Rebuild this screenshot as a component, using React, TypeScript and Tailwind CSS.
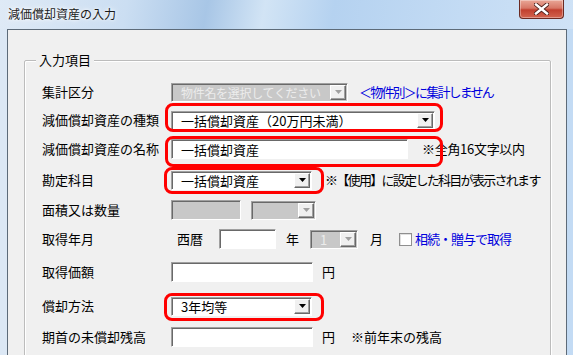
type ComboProps = {
  width: string;
  text?: string;
  disabled?: boolean;
  small?: boolean;
};

function Arrow({ disabled }: { disabled?: boolean }) {
  return (
    <div className="flex h-full w-[16px] shrink-0 items-center justify-center border-t border-l border-t-white border-l-white border-r border-b border-r-[#696969] border-b-[#696969] bg-[#f0f0f0] shadow-[inset_-1px_-1px_0_#a0a0a0]">
      <svg width="7" height="4" viewBox="0 0 7 4">
        <path d="M0 0h7L3.5 4z" fill={disabled ? "#a0a0a0" : "#000"} />
      </svg>
    </div>
  );
}

function Combo({ width, text, disabled, small }: ComboProps) {
  return (
    <div
      className={`flex h-[19px] shrink-0 items-stretch border border-t-[#a0a0a0] border-l-[#a0a0a0] border-b-white border-r-white shadow-[inset_1px_1px_0_#696969] ${width} ${
        disabled ? "bg-[#c8c8c8]" : "bg-white"
      }`}
    >
      <div
        className={`flex flex-1 items-center overflow-hidden whitespace-nowrap pl-[9px] pt-px leading-none ${
          small ? "text-[12px] tracking-[-0.3px]" : "text-[13px]"
        } ${disabled ? "text-[#ececec]" : "text-black"}`}
      >
        {text}
      </div>
      <div className="py-px pr-px">
        <Arrow disabled={disabled} />
      </div>
    </div>
  );
}

function TextBox({ width, disabled }: { width: string; disabled?: boolean }) {
  return (
    <div
      className={`h-[20px] shrink-0 border border-t-[#a0a0a0] border-l-[#a0a0a0] border-b-white border-r-white shadow-[inset_1px_1px_0_#696969] ${width} ${
        disabled ? "bg-[#c8c8c8]" : "bg-white"
      }`}
    />
  );
}

function Row({
  h,
  label,
  children,
}: {
  h: string;
  label: string;
  children?: React.ReactNode;
}) {
  return (
    <div className={`relative flex items-center ${h}`}>
      <div className="w-[129px] shrink-0 whitespace-nowrap">{label}</div>
      {children}
    </div>
  );
}

function CloseButton() {
  return (
    <div className="flex h-[19px] w-[45px] items-center justify-center rounded-b-[4px] border border-t-0 border-[#6b2a22] bg-[linear-gradient(180deg,#e9a797_0%,#d77766_45%,#c1402f_55%,#d2644f_100%)] shadow-[inset_0_0_0_1px_rgba(255,255,255,0.35)]">
      <svg width="15" height="12" viewBox="0 0 15 12">
        <path
          d="M2 1.5l11 9M13 1.5l-11 9"
          stroke="#4a1f1a"
          strokeWidth="4.2"
          strokeLinecap="square"
        />
        <path
          d="M2 1.5l11 9M13 1.5l-11 9"
          stroke="#fff"
          strokeWidth="2.4"
          strokeLinecap="square"
        />
      </svg>
    </div>
  );
}

export default function App() {
  return (
    <div className="flex h-[355px] w-[573px] flex-col overflow-hidden bg-[#c8dcf2] font-['Noto_Sans_CJK_JP',sans-serif] text-[13px] text-black">
      {/* title bar */}
      <div className="flex h-[29px] shrink-0 items-start bg-[linear-gradient(100deg,#dfeaf6_0%,#cbdef2_22%,#a8c6e6_36%,#d2e4f5_46%,#b5d2f0_58%,#c3dbf4_80%,#cfe2f6_100%)]">
        <div className="pl-[8px] pt-[6px] text-[12px] leading-[16px] text-[#1a1a1a] [text-shadow:0_0_6px_#fff,0_0_3px_#fff]">
          減価償却資産の入力
        </div>
        <div className="ml-auto mr-[9px]">
          <CloseButton />
        </div>
      </div>

      {/* client */}
      <div className="flex flex-1">
        <div className="w-[7px] shrink-0 bg-[#dce8f5]" />
        <div className="flex-1 border-t border-l border-r border-[#5d6b79] bg-[#f0f0f0] pl-[16px] pr-[15px] pt-[30px]">
          <div className="relative h-[400px] rounded-[2px] border border-[#bcbcbc] pl-[17px] pt-[17px] shadow-[inset_1px_1px_0_#fff,1px_1px_0_#fff]">
            <span className="absolute -top-[10px] left-[11px] bg-[#f0f0f0] px-[3px] leading-[18px]">
              入力項目
            </span>

            <Row h="h-[28px]" label="集計区分">
              <Combo width="w-[177px]" text="物件名を選択してください" disabled small />
              <span className="ml-[11px] whitespace-nowrap tracking-[-1.8px] text-[#0000dd]">
                ＜物件別＞に集計しません
              </span>
            </Row>

            <Row h="h-[28px]" label="減価償却資産の種類">
              <Combo width="w-[264px]" text="一括償却資産（20万円未満）" />
              <div className="pointer-events-none absolute left-[123px] top-[-3px] h-[29px] w-[278px] rounded-[8px] border-[3px] border-[#f00]" />
            </Row>

            <Row h="h-[30px]" label="減価償却資産の名称">
              <div className="flex h-[20px] w-[237px] shrink-0 items-center border border-t-[#a0a0a0] border-l-[#a0a0a0] border-b-white border-r-white bg-white pl-[9px] pt-px leading-none shadow-[inset_1px_1px_0_#696969]">
                一括償却資産
              </div>
              <span className="ml-[14px] whitespace-nowrap tracking-[-0.3px]">※全角16文字以内</span>
              <div className="pointer-events-none absolute left-[123px] top-[2px] h-[31px] w-[278px] rounded-[8px] border-[3px] border-[#f00]" />
            </Row>

            <Row h="h-[32px]" label="勘定科目">
              <Combo width="w-[141px]" text="一括償却資産" />
              <span className="ml-[13px] whitespace-nowrap tracking-[-1.7px]">
                ※【使用】に設定した科目が表示されます
              </span>
              <div className="pointer-events-none absolute left-[122px] top-[3px] h-[27px] w-[160px] rounded-[8px] border-[3px] border-[#f00]" />
            </Row>

            <Row h="h-[28px]" label="面積又は数量">
              <TextBox width="w-[70px]" disabled />
              <div className="ml-[10px]">
                <Combo width="w-[65px]" disabled />
              </div>
            </Row>

            <Row h="h-[30px]" label="取得年月">
              <span className="ml-[6px]">西暦</span>
              <div className="ml-[16px]">
                <TextBox width="w-[57px]" />
              </div>
              <span className="ml-[10px]">年</span>
              <div className="ml-[11px]">
                <Combo width="w-[48px]" text="1" disabled />
              </div>
              <span className="ml-[12px]">月</span>
              <div className="ml-[16px] h-[13px] w-[13px] shrink-0 border border-[#8f8f8f] bg-white shadow-[inset_1px_1px_0_#e0e0e0]" />
              <span className="ml-[3px] whitespace-nowrap tracking-[-1px] text-[#0000dd]">相続・贈与で取得</span>
            </Row>

            <Row h="h-[36px]" label="取得価額">
              <TextBox width="w-[142px]" />
              <span className="ml-[9px]">円</span>
            </Row>

            <Row h="h-[32px]" label="償却方法">
              <Combo width="w-[141px]" text="3年均等" />
              <div className="pointer-events-none absolute left-[122px] top-[3px] h-[28px] w-[160px] rounded-[8px] border-[3px] border-[#f00]" />
            </Row>

            <Row h="h-[30px]" label="期首の未償却残高">
              <TextBox width="w-[142px]" />
              <span className="ml-[9px]">円</span>
              <span className="ml-[16px] whitespace-nowrap">※前年末の残高</span>
            </Row>
          </div>
        </div>
        <div className="w-[6px] shrink-0 bg-[#c3dbf4]" />
      </div>
    </div>
  );
}
